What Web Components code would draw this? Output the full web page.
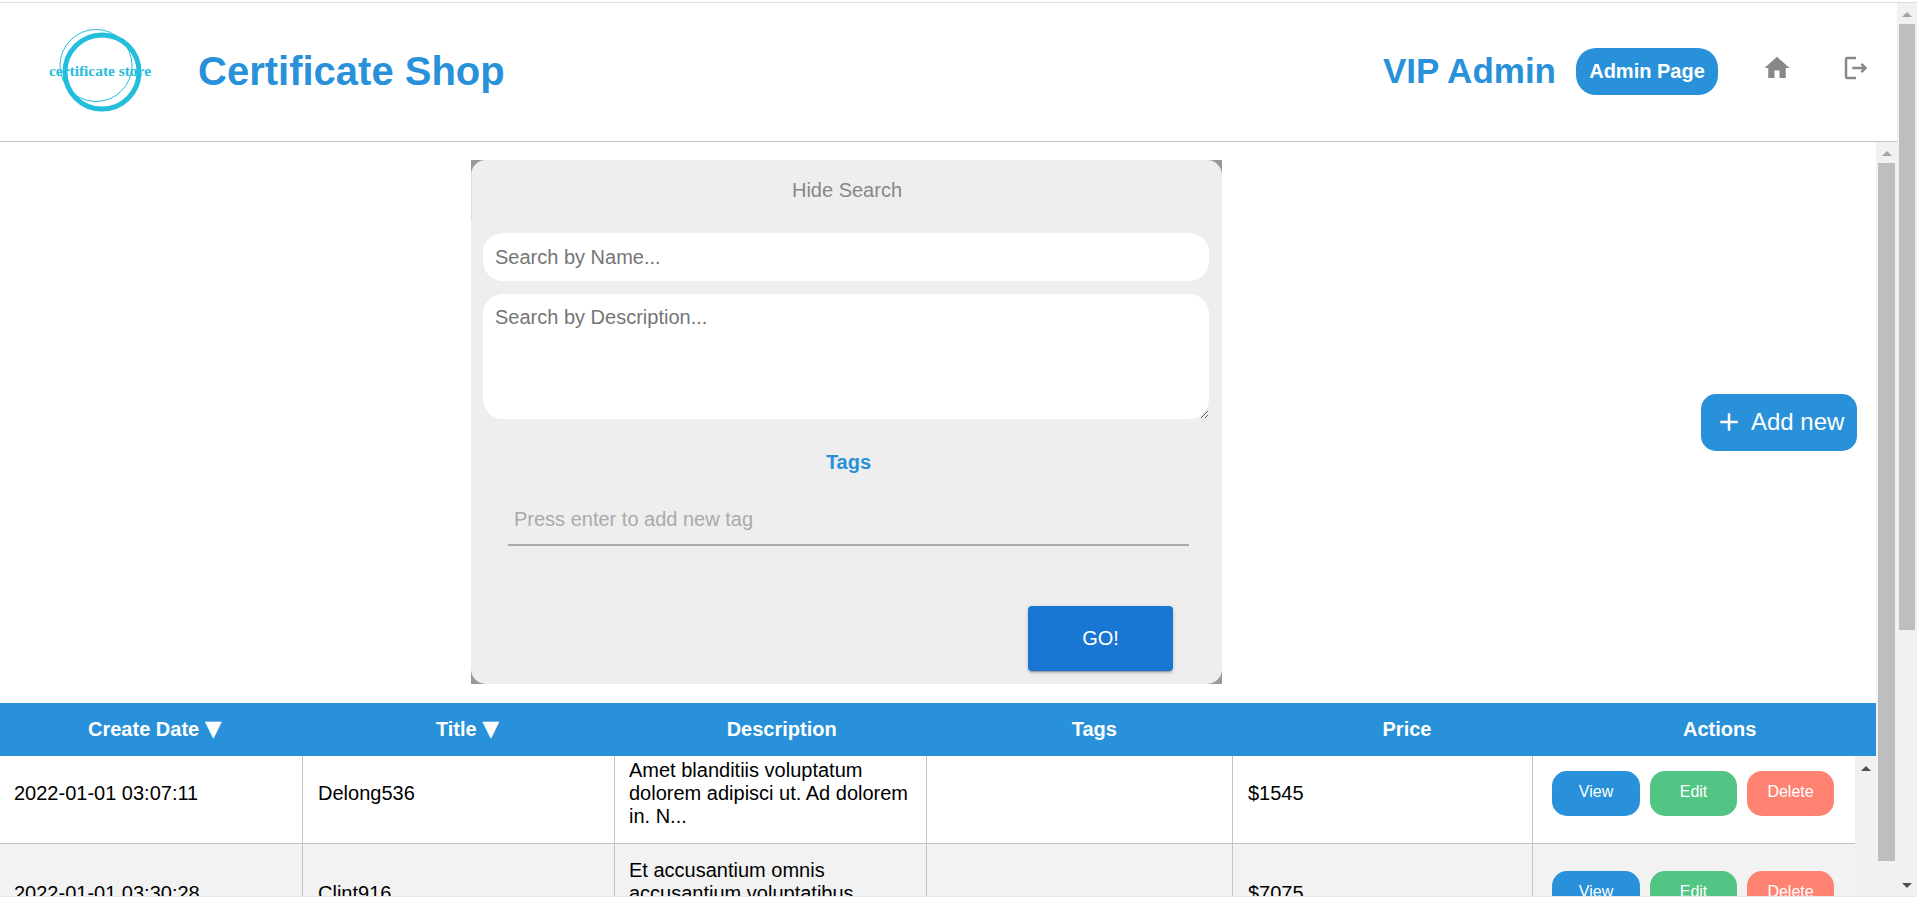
<!DOCTYPE html>
<html lang="en">
<head>
<meta charset="utf-8">
<title>Certificate Shop</title>
<style>
html,body{margin:0;height:897px;overflow:hidden;background:#fff}
body{font-family:"Liberation Sans",Arial,sans-serif;font-size:20px;color:#000}
</style>
</head>
<body>
<app-shell>
  <site-header slot="header"></site-header>
  <search-panel slot="search"></search-panel>
  <add-button slot="add">Add new</add-button>
  <data-table slot="table">
    <table-row pb="13" h="87">
      <span slot="date">2022-01-01 03:07:11</span>
      <span slot="title">Delong536</span>
      <span slot="desc">Amet blanditiis voluptatum dolorem adipisci ut. Ad dolorem in. N...</span>
      <span slot="price">$1545</span>
    </table-row>
    <table-row pb="15" h="113" alt>
      <span slot="date">2022-01-01 03:30:28</span>
      <span slot="title">Clint916</span>
      <span slot="desc">Et accusantium omnis accusantium voluptatibus</span>
      <span slot="price">$7075</span>
    </table-row>
  </data-table>
</app-shell>

<script>
function define(name, html, extra){
  const tpl=document.createElement('template');
  tpl.innerHTML=html;
  customElements.define(name,class extends HTMLElement{
    constructor(){super();this.attachShadow({mode:'open'}).appendChild(tpl.content.cloneNode(true));}
    connectedCallback(){ if(extra) extra(this); }
  });
}

define('scroll-bar',`
<style>
:host{display:flex;flex-direction:column;align-items:center;box-sizing:border-box;background:#f1f1f1;overflow:hidden;position:relative}
.arrow{width:0;height:0;border-left:5px solid transparent;border-right:5px solid transparent;flex:none}
.up{border-bottom:5px solid var(--up,#a3a3a3);margin-top:var(--arrow-top,9px)}
.thumb{background:#bebebe;width:var(--thumb-w,16px);height:var(--thumb-h,100px);margin-top:var(--thumb-gap,6px);flex:none}
.spacer{flex:1}
.down{border-top:5px solid #505050;margin-bottom:var(--arrow-bottom,9px);display:var(--down,block)}
</style>
<div class="arrow up"></div><div class="thumb"></div><div class="spacer"></div><div class="arrow down"></div>`);

define('site-header',`
<style>
:host{display:flex;align-items:center;height:136px;padding-bottom:2px;box-sizing:content-box;border-bottom:1px solid #c4c4c4;background:#fff;font-family:"Liberation Sans",Arial,sans-serif;color:#2891da}
svg{display:block;flex:none}
.logo{margin-left:40px;margin-top:2px;width:120px;height:90px}
h1{margin:0 0 0 38px;font-size:40px;font-weight:700;line-height:46px;white-space:nowrap}
.user{margin-left:auto;font-size:35px;font-weight:700;line-height:40px;white-space:nowrap}
.admin{margin-left:20px;width:142px;height:47px;border-radius:20px;background:#2891da;color:#fff;font-size:20px;font-weight:700;display:flex;align-items:center;justify-content:center}
.home{margin-left:44px;margin-top:-7px}
.out{margin-left:49px;margin-right:26px;margin-top:-7px}
</style>
<svg class="logo" viewBox="0 0 120 90" aria-label="logo">
  <circle cx="56" cy="38.5" r="36" fill="none" stroke="#23bedc" stroke-width="1"/>
  <circle cx="62" cy="45" r="37" fill="none" stroke="#23bedc" stroke-width="5"/>
  <text x="60" y="49" text-anchor="middle" textLength="102" lengthAdjust="spacingAndGlyphs" font-family="Liberation Serif,serif" font-weight="700" font-size="15" fill="#23bedc">certificate store</text>
</svg>
<h1>Certificate Shop</h1>
<div class="user">VIP Admin</div>
<div class="admin">Admin Page</div>
<svg class="home" width="30" height="30" viewBox="0 0 24 24" fill="#888"><path d="M10 20v-6h4v6h5v-8h3L12 3 2 12h3v8z"/></svg>
<svg class="out" width="30" height="30" viewBox="0 0 24 24" fill="#888"><path d="m17 8-1.41 1.41L17.17 11H9v2h8.17l-1.58 1.58L17 16l4-4-4-4zM5 5h7V3H5c-1.1 0-2 .9-2 2v14c0 1.1.9 2 2 2h7v-2H5V5z"/></svg>`);

define('search-panel',`
<style>
:host{display:block;background:#999;width:751px;height:524px;font-family:"Liberation Sans",Arial,sans-serif;position:relative}
.box{background:#eee;border-radius:15px;height:100%;box-sizing:border-box;padding:19px 13px 12px 12px;display:flex;flex-direction:column}
.edge{position:absolute;left:0;top:15px;width:1px;height:46px;background:#ddd}
.hide{color:#888;font-size:20px;line-height:23px;text-align:center;margin:0 0 31px 2px}
input,textarea{font:20px/23px "Liberation Sans",Arial,sans-serif;border:none;outline:none;background:#fff;display:block;box-sizing:border-box;width:100%}
input::placeholder,textarea::placeholder{color:#757575;opacity:1}
.name{height:48px;border-radius:20px;padding:0 12px;flex:none}
.descr{height:125px;border-radius:20px;padding:12px;margin-top:13px;flex:none;resize:both}
.tags{color:#2891da;font-weight:700;font-size:20px;line-height:23px;text-align:center;margin:32px 0 16px 5px}
.tag{margin:0 20px 0 25px;width:auto;height:56px;background:transparent;border-bottom:2px solid #aaa;padding:4px 0 0 6px;flex:none}
.tag::placeholder{color:#aaa}
.go{align-self:flex-end;margin:60px 36px 0 0;width:145px;height:65px;border:none;border-radius:4px;background:#1976d2;color:#fff;font:20px "Liberation Sans",Arial,sans-serif;box-shadow:0 3px 1px -2px rgba(0,0,0,.2),0 2px 2px 0 rgba(0,0,0,.14),0 1px 5px 0 rgba(0,0,0,.12);flex:none}
</style>
<div class="box">
  <div class="hide">Hide Search</div>
  <input class="name" placeholder="Search by Name...">
  <textarea class="descr" placeholder="Search by Description..."></textarea>
  <div class="tags">Tags</div>
  <input class="tag" placeholder="Press enter to add new tag">
  <button class="go">GO!</button>
</div>
<div class="edge"></div>`);

define('add-button',`
<style>
:host{display:flex;align-items:center;width:156px;height:57px;box-sizing:border-box;border-radius:15px;background:#2891da;color:#fff;font:24px "Liberation Sans",Arial,sans-serif;padding-left:13px}
svg{flex:none;margin-right:7px}
</style>
<svg width="30" height="30" viewBox="0 0 24 24" fill="#fff"><path d="M19 13h-6v6h-2v-6H5v-2h6V5h2v6h6v2z"/></svg><slot></slot>`);

define('pill-button',`
<style>
:host{display:flex;align-items:center;justify-content:center;width:var(--w,87px);height:45px;border-radius:15px;background:var(--c);color:#fff;font:16px "Liberation Sans",Arial,sans-serif;padding-bottom:2px;box-sizing:border-box;flex:none}
</style><slot></slot>`);

define('table-row',`
<style>
:host{display:grid;grid-template-columns:303px 312px 312px 306px 300px 322px;background:var(--bg,#fff);border-bottom:1px solid #c4c4c4;font:20px/23px "Liberation Sans",Arial,sans-serif;color:#000;flex:none}
.c{display:flex;align-items:center;box-sizing:border-box;border-right:1px solid #c4c4c4;padding:0 14px var(--pb,13px) 14px;min-width:0;height:var(--h,87px)}
.c.t{padding-left:15px}
.c.d{padding-left:14px}
.c.p{padding-left:15px}
.desc{height:69px;overflow:hidden}
.a{border-right:none;padding-left:19px;padding-right:0;gap:10px}
</style>
<div class="c"><slot name="date"></slot></div>
<div class="c t"><slot name="title"></slot></div>
<div class="c d"><div class="desc"><slot name="desc"></slot></div></div>
<div class="c"></div>
<div class="c p"><slot name="price"></slot></div>
<div class="c a">
  <pill-button style="--c:#2891da;--w:88px">View</pill-button>
  <pill-button style="--c:#52c584">Edit</pill-button>
  <pill-button style="--c:#ff8373">Delete</pill-button>
</div>`,el=>{
  el.style.setProperty('--pb',el.getAttribute('pb')+'px');
  el.style.setProperty('--h',el.getAttribute('h')+'px');
  if(el.hasAttribute('alt')) el.style.setProperty('--bg','#f2f2f2');
});

define('data-table',`
<style>
:host{display:block;font-family:"Liberation Sans",Arial,sans-serif}
.head{display:grid;grid-template-columns:repeat(6,1fr);height:53px;background:#2891da;color:#fff;font-size:20px;font-weight:700;align-items:center;text-align:center}
.sort{padding-right:3px}
.tri{font-family:"DejaVu Sans",sans-serif;font-weight:400;font-size:22px;line-height:0}
.body{display:flex;align-items:stretch}
.rows{width:1855px;flex:none;display:flex;flex-direction:column}
scroll-bar{width:21px;flex:none;--up:#505050;--arrow-top:10px;--thumb-h:0px;--down:none}
</style>
<div class="head"><div class="sort">Create Date <span class="tri">▼</span></div><div class="sort">Title <span class="tri">▼</span></div><div>Description</div><div>Tags</div><div>Price</div><div>Actions</div></div>
<div class="body"><div class="rows"><slot></slot></div><scroll-bar></scroll-bar></div>`);

define('app-shell',`
<style>
:host{display:flex;flex-direction:column;height:897px;overflow:hidden;background:#fff}
.rule{height:1px;background:#ddd;margin-top:2px;flex:none}
.frame{flex:1;display:flex;min-height:0}
.left{width:1897px;flex:none;display:flex;flex-direction:column;min-height:0}
.content{flex:1;display:flex;min-height:0}
.view{width:1876px;flex:none;overflow:hidden}
.top{display:grid;grid-template-columns:471px 751px 1fr;padding:18px 0 19px}
.top ::slotted(search-panel){grid-column:2}
.add{grid-column:3;align-self:center;justify-self:end;margin-right:19px}
.bar-in{width:21px;flex:none;--thumb-w:17px;--thumb-h:698px;--arrow-top:9px;--thumb-gap:7px;--down:none}
.bar-out{width:20px;flex:none;--thumb-w:16px;--thumb-h:606px;--arrow-top:9px;--thumb-gap:7px;--arrow-bottom:8px}
.strip{height:1px;background:#e4ecec;flex:none}
</style>
<div class="rule"></div>
<div class="frame">
  <div class="left">
    <slot name="header"></slot>
    <div class="content">
      <div class="view">
        <div class="top"><slot name="search"></slot><div class="add"><slot name="add"></slot></div></div>
        <slot name="table"></slot>
      </div>
      <scroll-bar class="bar-in"></scroll-bar>
    </div>
  </div>
  <scroll-bar class="bar-out"></scroll-bar>
</div>
<div class="strip"></div>`);
</script>
</body>
</html>
